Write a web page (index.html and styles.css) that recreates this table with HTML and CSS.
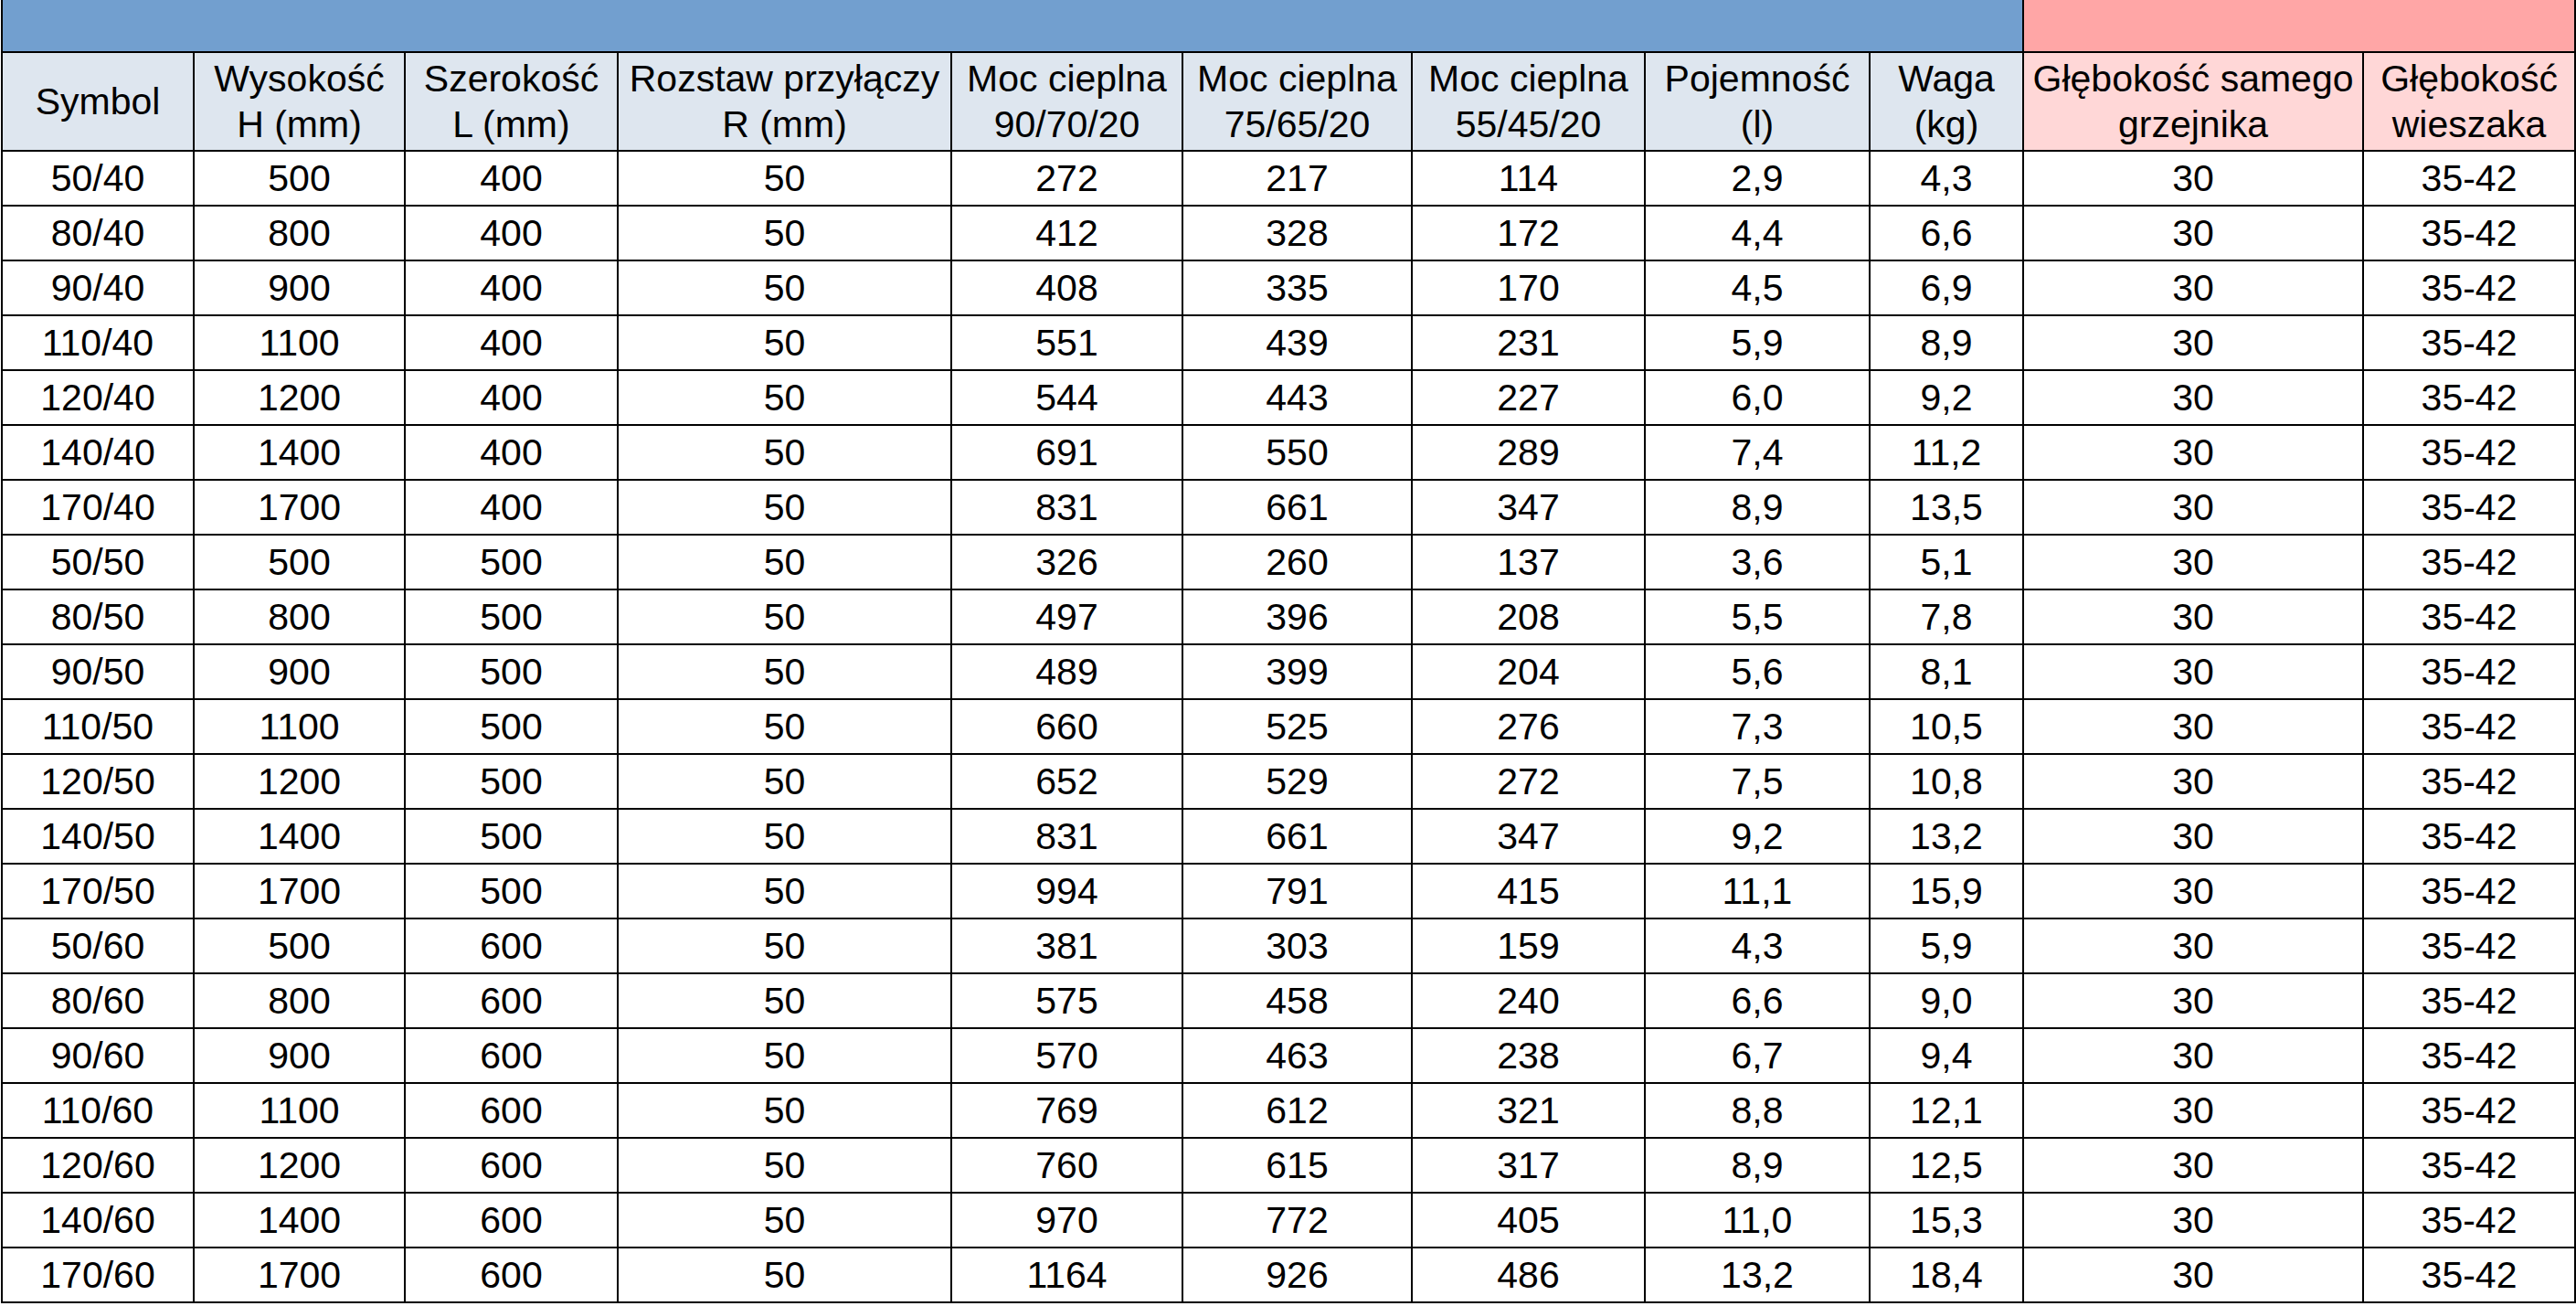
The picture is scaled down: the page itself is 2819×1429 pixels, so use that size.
FILE: index.html
```html
<!DOCTYPE html>
<html lang="pl">
<head>
<meta charset="utf-8">
<title>Tabela grzejników</title>
<link rel="stylesheet" href="styles.css">
</head>
<body>
<table class="specs">
  <colgroup>
    <col class="c-symbol">
    <col class="c-h">
    <col class="c-l">
    <col class="c-r">
    <col class="c-p1">
    <col class="c-p2">
    <col class="c-p3">
    <col class="c-vol">
    <col class="c-kg">
    <col class="c-d1">
    <col class="c-d2">
  </colgroup>
  <thead>
    <tr class="band">
      <th class="band-blue" colspan="9"></th>
      <th class="band-pink" colspan="2"></th>
    </tr>
    <tr class="head">
      <th class="hb">Symbol</th>
      <th class="hb">Wysokość<br>H (mm)</th>
      <th class="hb">Szerokość<br>L (mm)</th>
      <th class="hb">Rozstaw przyłączy<br>R (mm)</th>
      <th class="hb">Moc cieplna<br>90/70/20</th>
      <th class="hb">Moc cieplna<br>75/65/20</th>
      <th class="hb">Moc cieplna<br>55/45/20</th>
      <th class="hb">Pojemność<br>(l)</th>
      <th class="hb">Waga<br>(kg)</th>
      <th class="hp">Głębokość samego<br>grzejnika</th>
      <th class="hp">Głębokość<br>wieszaka</th>
    </tr>
  </thead>
  <tbody>
    <tr><td>50/40</td><td>500</td><td>400</td><td>50</td><td>272</td><td>217</td><td>114</td><td>2,9</td><td>4,3</td><td>30</td><td>35-42</td></tr>
    <tr><td>80/40</td><td>800</td><td>400</td><td>50</td><td>412</td><td>328</td><td>172</td><td>4,4</td><td>6,6</td><td>30</td><td>35-42</td></tr>
    <tr><td>90/40</td><td>900</td><td>400</td><td>50</td><td>408</td><td>335</td><td>170</td><td>4,5</td><td>6,9</td><td>30</td><td>35-42</td></tr>
    <tr><td>110/40</td><td>1100</td><td>400</td><td>50</td><td>551</td><td>439</td><td>231</td><td>5,9</td><td>8,9</td><td>30</td><td>35-42</td></tr>
    <tr><td>120/40</td><td>1200</td><td>400</td><td>50</td><td>544</td><td>443</td><td>227</td><td>6,0</td><td>9,2</td><td>30</td><td>35-42</td></tr>
    <tr><td>140/40</td><td>1400</td><td>400</td><td>50</td><td>691</td><td>550</td><td>289</td><td>7,4</td><td>11,2</td><td>30</td><td>35-42</td></tr>
    <tr><td>170/40</td><td>1700</td><td>400</td><td>50</td><td>831</td><td>661</td><td>347</td><td>8,9</td><td>13,5</td><td>30</td><td>35-42</td></tr>
    <tr><td>50/50</td><td>500</td><td>500</td><td>50</td><td>326</td><td>260</td><td>137</td><td>3,6</td><td>5,1</td><td>30</td><td>35-42</td></tr>
    <tr><td>80/50</td><td>800</td><td>500</td><td>50</td><td>497</td><td>396</td><td>208</td><td>5,5</td><td>7,8</td><td>30</td><td>35-42</td></tr>
    <tr><td>90/50</td><td>900</td><td>500</td><td>50</td><td>489</td><td>399</td><td>204</td><td>5,6</td><td>8,1</td><td>30</td><td>35-42</td></tr>
    <tr><td>110/50</td><td>1100</td><td>500</td><td>50</td><td>660</td><td>525</td><td>276</td><td>7,3</td><td>10,5</td><td>30</td><td>35-42</td></tr>
    <tr><td>120/50</td><td>1200</td><td>500</td><td>50</td><td>652</td><td>529</td><td>272</td><td>7,5</td><td>10,8</td><td>30</td><td>35-42</td></tr>
    <tr><td>140/50</td><td>1400</td><td>500</td><td>50</td><td>831</td><td>661</td><td>347</td><td>9,2</td><td>13,2</td><td>30</td><td>35-42</td></tr>
    <tr><td>170/50</td><td>1700</td><td>500</td><td>50</td><td>994</td><td>791</td><td>415</td><td>11,1</td><td>15,9</td><td>30</td><td>35-42</td></tr>
    <tr><td>50/60</td><td>500</td><td>600</td><td>50</td><td>381</td><td>303</td><td>159</td><td>4,3</td><td>5,9</td><td>30</td><td>35-42</td></tr>
    <tr><td>80/60</td><td>800</td><td>600</td><td>50</td><td>575</td><td>458</td><td>240</td><td>6,6</td><td>9,0</td><td>30</td><td>35-42</td></tr>
    <tr><td>90/60</td><td>900</td><td>600</td><td>50</td><td>570</td><td>463</td><td>238</td><td>6,7</td><td>9,4</td><td>30</td><td>35-42</td></tr>
    <tr><td>110/60</td><td>1100</td><td>600</td><td>50</td><td>769</td><td>612</td><td>321</td><td>8,8</td><td>12,1</td><td>30</td><td>35-42</td></tr>
    <tr><td>120/60</td><td>1200</td><td>600</td><td>50</td><td>760</td><td>615</td><td>317</td><td>8,9</td><td>12,5</td><td>30</td><td>35-42</td></tr>
    <tr><td>140/60</td><td>1400</td><td>600</td><td>50</td><td>970</td><td>772</td><td>405</td><td>11,0</td><td>15,3</td><td>30</td><td>35-42</td></tr>
    <tr><td>170/60</td><td>1700</td><td>600</td><td>50</td><td>1164</td><td>926</td><td>486</td><td>13,2</td><td>18,4</td><td>30</td><td>35-42</td></tr>
  </tbody>
</table>
</body>
</html>
```
FILE: styles.css
```css
html, body {
  margin: 0;
  padding: 0;
  background: #ffffff;
}

.specs {
  border-collapse: collapse;
  table-layout: fixed;
  width: 2816px;
  font-family: "Liberation Sans", Arial, sans-serif;
  font-size: 41px;
  color: #000000;
  margin-left: 1px;
}

.c-symbol { width: 210px; }
.c-h { width: 231px; }
.c-l { width: 233px; }
.c-r { width: 365px; }
.c-p1 { width: 253px; }
.c-p2 { width: 251px; }
.c-p3 { width: 255px; }
.c-vol { width: 246px; }
.c-kg { width: 168px; }
.c-d1 { width: 372px; }
.c-d2 { width: 232px; }

.specs th,
.specs td {
  border: 2px solid #000000;
  padding: 0;
  text-align: center;
  vertical-align: middle;
  white-space: nowrap;
  font-weight: normal;
}

.band th {
  border-top: 0;
  height: 56px;
}

.band-blue { background: #729fcf; }
.band-pink { background: #ffa6a6; }

.head th {
  height: 106px;
  line-height: 50px;
}

.hb { background: #dee6ef; }
.hp { background: #ffd7d7; }

.specs td {
  height: 58px;
  line-height: 46px;
}
```
